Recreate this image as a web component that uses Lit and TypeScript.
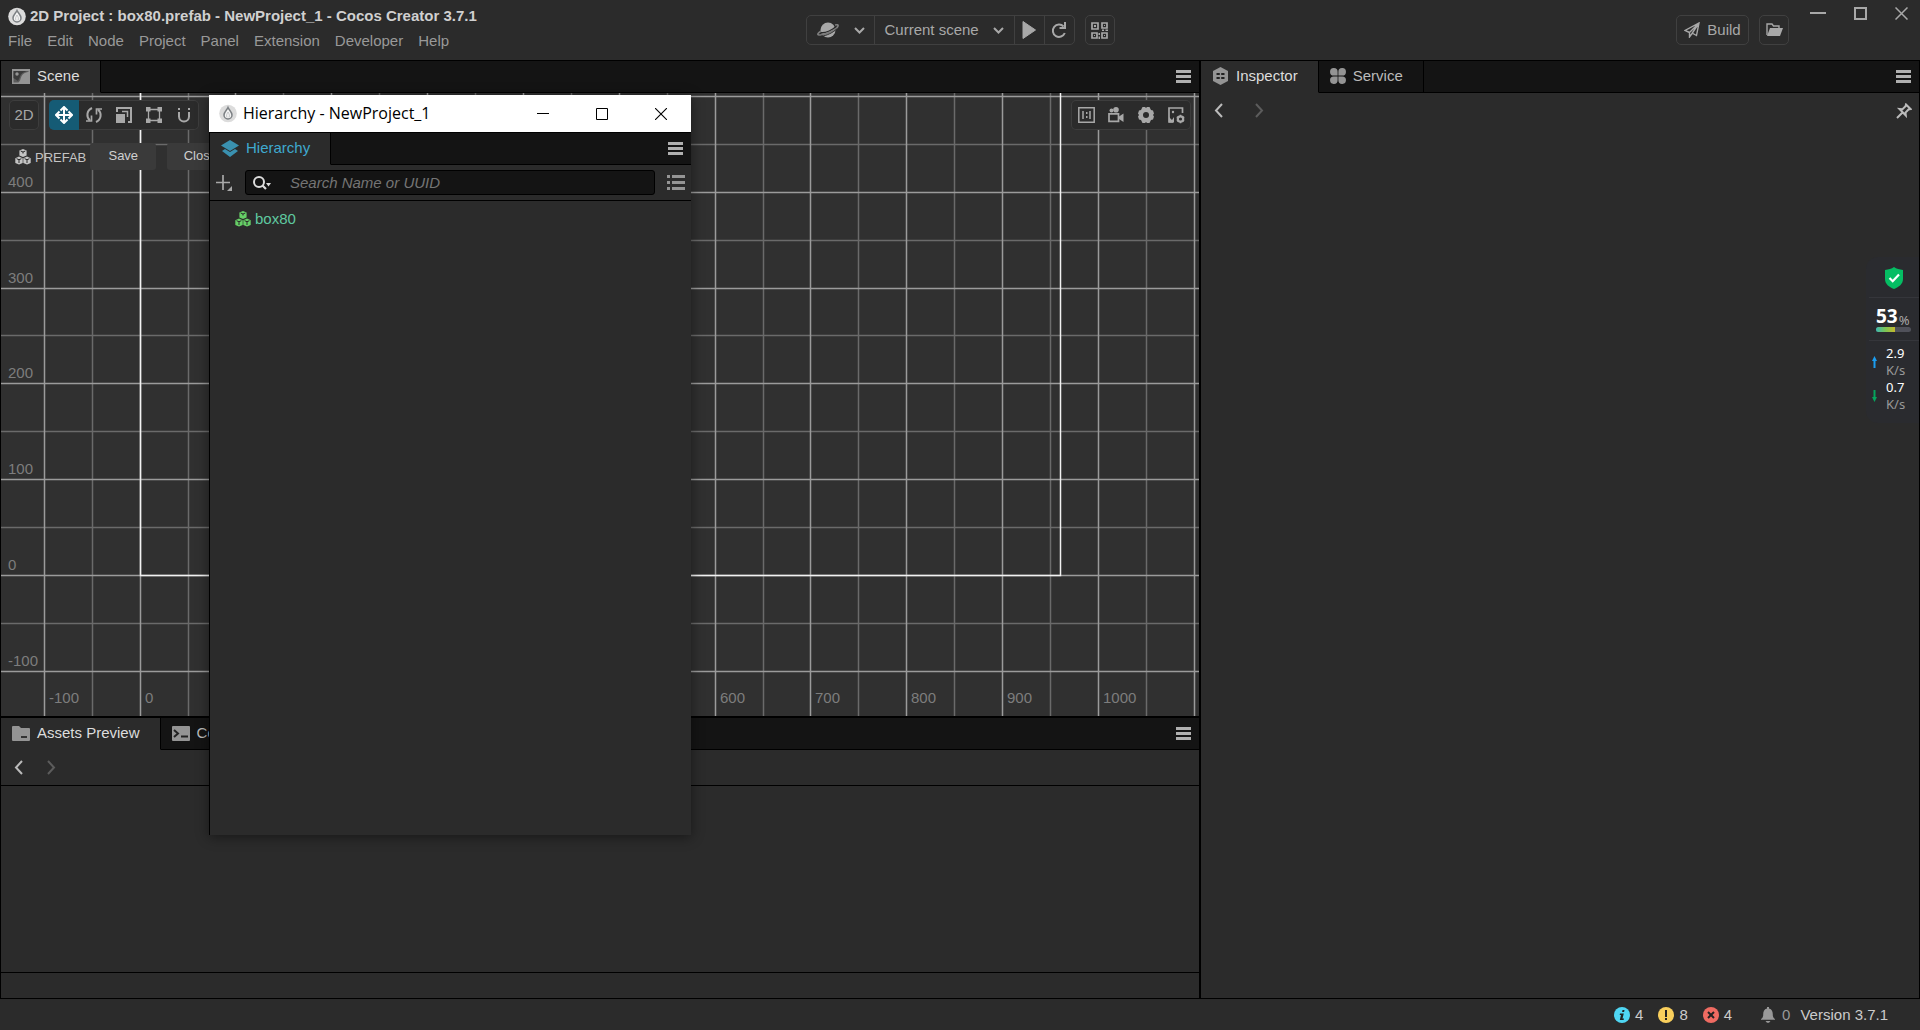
import { LitElement, html, svg, css } from "lit";
import { customElement } from "lit/decorators.js";

const SCALE = 115 / 120;
const ORIGIN_X = 138.6;
const ORIGIN_Y = 482;

const range = (from: number, to: number, step: number) => {
  const out: number[] = [];
  for (let v = from; v <= to; v += step) out.push(v);
  return out;
};

const icon = (w: number, h: number, body: unknown) =>
  html`<svg class="icon" width=${w} height=${h} viewBox="0 0 ${w} ${h}" aria-hidden="true">${body}</svg>`;

const chevron = (d: string, w: number, h: number) =>
  icon(w, h, svg`<path d=${d} fill="none" stroke="currentColor" stroke-width="2"/>`);
const down = () => chevron("M1 2 L5.500 6.500 L10 2", 11, 9);
const left = () => chevron("M8 1 L2 7.5 L8 14", 10, 15);
const right = () => chevron("M2 1 L8 7.5 L2 14", 10, 15);

const menuIcon = () =>
  icon(15, 13, svg`<path d="M0 0h15v3H0zM0 5h15v3H0zM0 10h15v3H0z" fill="currentColor"/>`);

const cubes = () =>
  icon(16, 16, svg`
    <path d="M8 0l3.600 1.500v5L8 8 4.400 6.500v-5z" fill="currentColor"/>
    <path d="M4 7.600l3.700 1.600v4.700L4 15.600.3 13.900V9.200z" fill="currentColor"/>
    <path d="M12 7.600l3.700 1.600v4.700L12 15.600l-3.700-1.700V9.200z" fill="currentColor"/>
    <path d="M5.700 2L8 3l2.300-1M8 3v1.500M1.600 9.700L4 10.700l2.400-1M4 10.700v3.300M9.600 9.700l2.400 1 2.400-1M12 10.700v3.300" fill="none" stroke="#2b2b2b" stroke-width="1"/>`);

const flame = () =>
  icon(18, 19, svg`
    <circle cx="9" cy="9.500" r="8.800" fill="#dcdcdc"/>
    <path d="M9 3.500C8 6 5 8 5 11a4 4 0 0 0 8 0C13 8 10 6 9 3.500z" fill="#f4f4f4" stroke="#7c8084" stroke-width="1.500"/>
    <path d="M9 8c-1 2-2 3-1 5.500M9 8c1 2 2 3 1 5.500" fill="none" stroke="#c3c5c7" stroke-width="1"/>`);

@customElement("app-root")
export class AppRoot extends LitElement {
  static styles = css`
    :host {
      display: block;
      font: 15px/20px "Liberation Sans", Arial, sans-serif;
      color: #ccc;
      --bg: #2b2b2b;
      --dark: #141414;
      --dim: #999;
    }
    * { box-sizing: border-box; }
    button, input {
      font: inherit;
      color: inherit;
      background: none;
      border: 0;
      padding: 0;
      margin: 0;
    }
    button { display: flex; align-items: center; justify-content: center; }
    h1, h2 { font: inherit; margin: 0; }
    .icon { display: block; flex: none; }
    .app {
      position: relative;
      height: 100vh;
      display: flex;
      flex-direction: column;
      background: var(--bg);
      overflow: hidden;
    }
    .header {
      height: 60px;
      flex: none;
      display: grid;
      grid-template-columns: 1fr auto 1fr;
    }
    .brand { display: flex; flex-direction: column; padding: 6px 0 0 8px; gap: 4px; }
    .title { display: flex; align-items: center; gap: 4px; white-space: nowrap; }
    .title h1 { font-weight: bold; color: #d0d0d0; }
    .menus { display: flex; gap: 15px; color: var(--dim); }
    .menus button { line-height: 22px; }
    .center { display: flex; gap: 10px; padding-top: 15px; color: #a8a8a8; }
    .group {
      display: flex;
      height: 30px;
      border: 1px solid #404040;
      border-radius: 5px;
      overflow: hidden;
    }
    .group button + button { border-left: 1px solid #404040; }
    .group .platform { width: 67px; gap: 15px; padding-left: 10px; justify-content: flex-start; }
    .group .current { width: 140px; gap: 14px; padding-left: 10px; justify-content: flex-start; }
    .square { width: 28px; }
    .step { width: 30px; }
    .end { display: flex; justify-content: flex-end; gap: 10px; padding-top: 15px; color: #a8a8a8; }
    .build { width: 71px; gap: 7px; }
    .window-controls { display: flex; height: 14px; gap: 28px; margin: -9px 12px 0 11px; }
    .body {
      flex: 1;
      min-height: 0;
      display: grid;
      grid-template-columns: minmax(0, 1198fr) minmax(0, 718fr);
      gap: 2px;
      padding: 1px;
      background: #000;
    }
    .left { display: grid; grid-template-rows: minmax(0, 655fr) minmax(0, 280fr); gap: 2px; }
    .panel { background: var(--bg); display: flex; flex-direction: column; min-height: 0; overflow: hidden; }
    .tabs {
      display: flex;
      flex: none;
      height: 32px;
      background: var(--dark);
    }
    .tab {
      gap: 7px;
      padding: 0 20px 1px 11px;
      border-right: 1px solid #000;
      border-bottom: 1px solid #000;
      color: #bbb;
      white-space: nowrap;
    }
    .tab.on { background: var(--bg); border-bottom-color: var(--bg); color: #ddd; }
    .tab .icon { color: #949494; }
    .fill { flex: 1; border-bottom: 1px solid #000; display: flex; justify-content: flex-end; align-items: center; padding-right: 8px; color: #b0b0b0; }
    .scene { position: relative; flex: 1; min-height: 0; background: #303030; overflow: hidden; }
    .grid { display: block; width: 100%; height: 100%; }
    .grid text { font: 15px "Liberation Sans", Arial, sans-serif; fill: #7d7d7d; }
    .tools {
      position: absolute;
      inset: 7px 8px auto 8px;
      display: flex;
      gap: 10px;
      color: #a8a8a8;
    }
    .tools .group { background: var(--bg); border: 0; box-shadow: inset 0 0 0 1px #3d3d3d; }
    .tools .group button { width: 30px; border: 0; }
    .tools .group .active { background: #155b75; color: #fff; }
    .tools .views { margin-left: auto; }
    .prefab {
      position: absolute;
      inset: 50px auto auto 14px;
      display: flex;
      align-items: center;
      gap: 4px;
      font-size: 13px;
      color: #c4c4c4;
    }
    .prefab span { padding-top: 2px; }
    .prefab button {
      height: 27px;
      width: 66px;
      padding-bottom: 2px;
      border-radius: 3px;
      background: #3a3a3a;
      color: #d0d0d0;
      margin-right: 7px;
    }
    .nav { display: flex; align-items: center; flex: none; height: 35px; padding: 0 7px 0 13px; gap: 22px; color: #bbb; }
    .nav .off { color: #5c5c5c; }
    .nav.wide { gap: 30px; }
    .nav .pin { margin-left: auto; }
    .assets { flex: 1; border-top: 1px solid #000; border-bottom: 1px solid #000; }
    .foot { height: 25px; flex: none; }
    .status {
      height: 31px;
      flex: none;
      display: flex;
      align-items: center;
      justify-content: flex-end;
      gap: 15px;
      padding-right: 32px;
    }
    .status button { gap: 5px; }
    .status .alerts { gap: 7px; margin-left: 14px; color: var(--dim); }
    .status .version { margin-left: -5px; }
    .window {
      position: absolute;
      left: 209px;
      top: 95px;
      width: 482px;
      height: 740px;
      display: flex;
      flex-direction: column;
      background: #000;
      box-shadow: 0 2px 12px rgba(0, 0, 0, 0.45);
    }
    .caption {
      height: 37px;
      flex: none;
      display: flex;
      align-items: center;
      gap: 6px;
      padding: 0 24px 0 10px;
      background: #fff;
      color: #000;
      font-family: "Open Sans", "Noto Sans", sans-serif;
    }
    .caption h2 { flex: 1; font-size: 16px; padding-bottom: 1px; }
    .caption .controls { display: flex; gap: 47px; }
    .window .panel { flex: 1; margin: 1px 0 0 1px; }
    .window .tab.on { color: #3fa9cf; }
    .window .tab.on .icon { color: #3a91b0; }
    .search { display: flex; align-items: center; gap: 12px; height: 36px; flex: none; padding: 0 6px; border-bottom: 1px solid #000; color: #a8a8a8; }
    .search .field {
      flex: 1;
      display: flex;
      align-items: center;
      height: 25px;
      gap: 19px;
      padding-left: 7px;
      border: 1px solid #000;
      border-radius: 3px;
      background: var(--dark);
      color: #ddd;
    }
    .search input { flex: 1; min-width: 0; outline: 0; font-style: italic; }
    .search input::placeholder { color: #757575; opacity: 1; }
    .node { display: flex; align-items: center; gap: 4px; padding: 8px 0 0 25px; color: #5fc9a0; }
    .node .icon { color: #66cf66; }
    .meter {
      position: absolute;
      right: 1px;
      top: 257px;
      width: 53px;
      padding: 10px 0 10px 3px;
      border-radius: 12px 0 0 12px;
      background: #2a2b2f;
      font-family: "Noto Sans", sans-serif;
      display: flex;
      flex-direction: column;
    }
    .meter .shield { height: 31px; display: flex; justify-content: center; align-items: flex-start; border-bottom: 1px solid #35363b; }
    .meter .load { padding: 7px 8px 8px 7px; border-bottom: 1px solid #35363b; }
    .meter .pct { display: flex; align-items: center; gap: 1px; height: 22px; color: #aaa; font-size: 13px; line-height: 22px; }
    .meter .pct span { padding-top: 8px; }
    .meter strong { font-size: 19px; color: #fff; }
    .bar { height: 5px; border-radius: 3px; background: #50515a; overflow: hidden; }
    .bar i { display: block; height: 5px; background: linear-gradient(90deg, #3cb8b0, #7cc455, #c5b82c); }
    .rates { display: grid; grid-template-columns: 5px auto; align-items: center; column-gap: 9px; padding: 4px 0 0 3px; font-size: 13px; line-height: 17px; color: #999; }
    .rates b { font-weight: normal; color: #fff; display: block; }
  `;

  private scene() {
    const x = (v: number) => Math.round(ORIGIN_X + v * SCALE) + 0.5;
    const y = (v: number) => Math.round(ORIGIN_Y - v * SCALE) + 0.5;
    const xs = range(-150, 2500, 50);
    const ys = range(-500, 500, 50);
    const major = (v: number) => v % 100 === 0;
    const minor = (v: number) => v % 100 !== 0;
    const columns = (vs: number[], tone: string) =>
      vs.map((v) => svg`<line x1=${x(v)} x2=${x(v)} y1="0" y2="100%" stroke=${tone} stroke-width="1.500"/>`);
    const rows = (vs: number[], tone: string) =>
      vs.map((v) => svg`<line x1="0" x2="100%" y1=${y(v)} y2=${y(v)} stroke=${tone} stroke-width="1.500"/>`);
    return html`<svg class="grid" role="img" aria-label="Scene grid">
      ${columns(xs.filter(minor), "#6a6a6a")}
      ${rows(ys.filter(minor), "#6a6a6a")}
      ${columns(xs.filter(major), "#9b9b9b")}
      ${rows(ys.filter(major), "#9b9b9b")}
      <rect x=${x(0)} y="-200" width=${x(960) - x(0)} height=${y(0) + 200} fill="none" stroke="#f2f2f2" stroke-width="1.500"/>
      ${range(-100, 400, 100).map((v) => svg`<text x="7" y=${y(v) - 5.5}>${v}</text>`)}
      ${[-100, 0, 600, 700, 800, 900, 1000].map((v) => svg`<text x=${x(v) + 4.5} y="610">${v}</text>`)}
    </svg>`;
  }

  private tools() {
    return html`<div class="tools">
      <div class="group"><button>2D</button></div>
      <div class="group">
        <button class="active" aria-label="Move">${icon(18, 18, svg`<path d="M9 2v14M2 9h14" stroke="currentColor" stroke-width="2"/><path d="M5.500 4.500L9 1l3.500 3.500M5.500 13.500L9 17l3.500-3.500M4.500 5.500L1 9l3.500 3.500M13.500 5.500L17 9l-3.500 3.500" fill="none" stroke="currentColor" stroke-width="2"/>`)}</button>
        <button aria-label="Rotate">${icon(18, 18, svg`<path d="M7 2C1.500 4.500 1 11 5 14.500M11 16c5.500-2.500 6-9 2-12.500" fill="none" stroke="currentColor" stroke-width="2"/><path d="M1 15h5.500V9.500M17 3h-5.500v5.500" fill="none" stroke="currentColor" stroke-width="1.700"/>`)}</button>
        <button aria-label="Scale">${icon(16, 16, svg`<path d="M1 5V1h14v14h-3" fill="none" stroke="currentColor" stroke-width="2"/><path d="M0 7h9v9H0z" fill="currentColor"/><path d="M6 4.500h5.500V10" fill="none" stroke="currentColor" stroke-width="1.500"/>`)}</button>
        <button aria-label="Rect">${icon(16, 16, svg`<path d="M2.500 2.500h11v11h-11z" fill="none" stroke="currentColor" stroke-width="1.300"/><path d="M0 0h4.500v4.500H0zM11.500 0H16v4.500h-4.500zM0 11.500h4.500V16H0zM11.500 11.500H16V16h-4.500z" fill="currentColor"/>`)}</button>
        <button aria-label="Snap">${icon(14, 16, svg`<path d="M2 5v4.500a5 5 0 0 0 10 0V5" fill="none" stroke="currentColor" stroke-width="2"/><path d="M1 1h2v2H1zM11 1h2v2h-2z" fill="currentColor"/>`)}</button>
      </div>
      <div class="group views">
        <button aria-label="Actual size">${icon(17, 16, svg`<path d="M.8.8h15.400v14.400H.8z" fill="none" stroke="currentColor" stroke-width="1.500"/><path d="M5 4v8M12 4v8" stroke="currentColor" stroke-width="1.500"/><path d="M8 5h1.500v2H8zM8 9h1.500v2H8z" fill="currentColor"/>`)}</button>
        <button aria-label="Camera">${icon(16, 16, svg`<path d="M1 6.800h9.500v7.500H1z" fill="none" stroke="currentColor" stroke-width="1.700"/><path d="M11 9.500l4.500-3v8.500l-4.500-3z" fill="currentColor"/><circle cx="3.500" cy="3.500" r="2" fill="currentColor"/><circle cx="8" cy="2.800" r="2.800" fill="currentColor"/>`)}</button>
        <button aria-label="Gizmo settings">${icon(16, 16, svg`<path fill-rule="evenodd" d="M4.500 0h2.500l1 1 1-1h2.500l1.500 3 2 .5 1 3-1 1.500 1 1.500-1 3-2 .5-1.500 3H9l-1-1-1 1H4.500L3 13l-2-.5-1-3L1 8 0 6.500l1-3L3 3zM8 5a3 3 0 1 0 0 6 3 3 0 0 0 0-6z" fill="currentColor"/>`)}</button>
        <button aria-label="Scene settings">${icon(17, 17, svg`<path d="M14.500 6V1H1v14h4" fill="none" stroke="currentColor" stroke-width="1.700"/><circle cx="5" cy="5" r="1.200" fill="currentColor"/><path d="M1 10l3 3 2-3v5.500H1z" fill="currentColor"/><circle cx="12.500" cy="12" r="2.700" fill="none" stroke="currentColor" stroke-width="2.200"/><path d="M12.500 7.800v8.400M8.800 9.900l7.400 4.200M16.200 9.900l-7.400 4.200" stroke="currentColor" stroke-width="1.500" stroke-dasharray="1.700 5"/>`)}</button>
      </div>
    </div>`;
  }

  render() {
    return html`<main class="app">
      <header class="header">
        <div class="brand">
          <div class="title">${flame()}<h1>2D Project : box80.prefab - NewProject_1 - Cocos Creator 3.7.1</h1></div>
          <nav class="menus">
            ${["File", "Edit", "Node", "Project", "Panel", "Extension", "Developer", "Help"].map((m) => html`<button>${m}</button>`)}
          </nav>
        </div>
        <div class="center">
          <div class="group">
            <button class="platform" aria-label="Preview platform">
              ${icon(22, 16, svg`<circle cx="11" cy="8" r="7.500" fill="currentColor"/><path d="M3 10.500C8 12 17 7.500 20 3.500" fill="none" stroke="#2b2b2b" stroke-width="1.500"/><path d="M4 9C0 11.500 0 13 3 13 8 13 20 7.500 21 4c.4-1.300-1-1.500-3-1" fill="none" stroke="#7c7c7c" stroke-width="1.700"/><path d="M4 14.300C9 14 17 10 19.500 7" fill="none" stroke="#2b2b2b" stroke-width="1"/>`)}${down()}
            </button>
            <button class="current">Current scene ${down()}</button>
            <button class="step" aria-label="Play">${icon(14, 18, svg`<path d="M1 .5l12.500 8.500L1 17.500z" fill="currentColor" stroke="currentColor" stroke-linejoin="round"/>`)}</button>
            <button class="step" aria-label="Refresh">${icon(16, 17, svg`<path d="M12.600 4.500A6.200 6.200 0 1 0 13.800 11" fill="none" stroke="currentColor" stroke-width="2"/><path d="M15 0v7H8.500V5H13V0z" fill="currentColor"/>`)}</button>
          </div>
          <div class="group">
            <button class="square" aria-label="QR code">${icon(17, 17, svg`<path d="M1 1h6v6H1zM11 1h5v5h-5zM1 11h5v5H1zM11 11h5v5h-5z" fill="none" stroke="currentColor" stroke-width="1.700"/><path d="M3 3h2v2H3zM13 3h1v1h-1zM3 13h1v1H3zM13 13h1v1h-1zM7.500 11H9v2H7.500zM7.500 14.500H9V17H7.500zM11 7.500h2V9h-2zM14.500 7.500H17V9h-2.500z" fill="currentColor"/>`)}</button>
          </div>
        </div>
        <div class="end">
          <div class="group"><button class="build">${icon(16, 16, svg`<path d="M5.500 10.500L1 8.500 15 1l-2.500 12.500-4.500-2.500M15 1L5.500 10.500v4.500l2.500-3.500L15 1" fill="none" stroke="currentColor" stroke-width="1.400"/>`)}Build</button></div>
          <div class="group"><button class="square" aria-label="Open folder">${icon(17, 14, svg`<path d="M1 12V1h5l1.500 2H13v2" fill="none" stroke="currentColor" stroke-width="1.400"/><path d="M4 5h13l-3 8H1z" fill="currentColor"/>`)}</button></div>
          <div class="window-controls">
            <button aria-label="Minimize">${icon(16, 14, svg`<path d="M0 6h16v2H0z" fill="currentColor"/>`)}</button>
            <button aria-label="Maximize">${icon(13, 13, svg`<path d="M1 1h11v11H1z" fill="none" stroke="currentColor" stroke-width="2"/>`)}</button>
            <button aria-label="Close">${icon(13, 13, svg`<path d="M.5.5l12 12M12.500.5L.5 12.500" stroke="currentColor" stroke-width="1.500"/>`)}</button>
          </div>
        </div>
      </header>

      <div class="body">
        <div class="left">
          <section class="panel">
            <div class="tabs">
              <button class="tab on">${icon(18, 15, svg`<path d="M0 0h18v15H0z" fill="#5c5c5c"/><path d="M0 0h18v2H0zM0 0h1.500v15H0zM16.500 0H18v15h-1.500zM0 13.500h18V15H0zM5 14.500c3-2 3-3 4-6 1-3 3-5 9-6v12z" fill="currentColor"/><path d="M1.500 2H15C9 4 8.500 6 7.500 9L6 12l-4.500-3z" fill="#3a3a3a"/><circle cx="5" cy="5" r="1.700" fill="currentColor"/>`)}Scene</button>
              <div class="fill"><button aria-label="Panel menu">${menuIcon()}</button></div>
            </div>
            <div class="scene">
              ${this.scene()} ${this.tools()}
              <div class="prefab">${cubes()}<span>PREFAB</span><button>Save</button><button>Close</button></div>
            </div>
          </section>
          <section class="panel">
            <div class="tabs">
              <button class="tab on">${icon(18, 15, svg`<path d="M0 1a1 1 0 0 1 1-1h6l2 2h8a1 1 0 0 1 1 1v11a1 1 0 0 1-1 1H1a1 1 0 0 1-1-1z" fill="currentColor"/><path d="M9 10h6v2H9z" fill="#333"/>`)}Assets Preview</button>
              <button class="tab">${icon(18, 15, svg`<rect width="18" height="15" rx="1" fill="currentColor"/><path d="M2 4l4 3.500L2 11M9 10.500h7" fill="none" stroke="#222" stroke-width="2"/>`)}Console</button>
              <div class="fill"><button aria-label="Panel menu">${menuIcon()}</button></div>
            </div>
            <div class="nav"><button aria-label="Back">${left()}</button><button class="off" aria-label="Forward">${right()}</button></div>
            <div class="assets"></div>
            <div class="foot"></div>
          </section>
        </div>
        <section class="panel">
          <div class="tabs">
            <button class="tab on">${icon(17, 18, svg`<path d="M8.500 0L16 4v10l-7.500 4L1 14V4z" fill="currentColor"/><path d="M4.500 6h3.300v2H4.500zM9.200 6h3.300v2H9.200zM4.500 10h3.300v2H4.500zM9.200 10h3.300v2H9.200z" fill="#222"/>`)}Inspector</button>
            <button class="tab">${icon(16, 16, svg`<path d="M4 0a3.700 3.700 0 0 1 3.600 3.700v3.900H3.700A3.800 3.800 0 0 1 4 0zM12 0a3.700 3.700 0 0 0-3.600 3.700v3.900h3.900A3.800 3.800 0 0 0 12 0zM4 16a3.700 3.700 0 0 0 3.600-3.700V8.400H3.700A3.800 3.800 0 0 0 4 16zM12 16a3.700 3.700 0 0 1-3.600-3.700V8.400h3.900A3.800 3.800 0 0 1 12 16z" fill="currentColor"/>`)}Service</button>
            <div class="fill"><button aria-label="Panel menu">${menuIcon()}</button></div>
          </div>
          <div class="nav wide">
            <button aria-label="Back">${left()}</button><button class="off" aria-label="Forward">${right()}</button>
            <button class="pin" aria-label="Pin">${icon(16, 16, svg`<path d="M10 1.500l4.500 4.500-2 .5-3 3 .3 3L3.500 6l3 .3 3-3zM6.500 9.500L1 15" fill="none" stroke="currentColor" stroke-width="2"/>`)}</button>
          </div>
        </section>
      </div>

      <footer class="status">
        <button aria-label="4 messages">${icon(16, 16, svg`<circle cx="8" cy="8" r="8" fill="#4fd6f3"/><path d="M8.500 3h2l-.4 2h-2zM6 6.500h3.800l-1.300 5H10l-.4 1.500H5.800l1.200-5H5.700z" fill="#222"/>`)}4</button>
        <button aria-label="8 warnings">${icon(16, 16, svg`<circle cx="8" cy="8" r="8" fill="#f9cf5c"/><path d="M7 3h2v7H7zM7 11h2v2H7z" fill="#222"/>`)}8</button>
        <button aria-label="4 errors">${icon(16, 16, svg`<circle cx="8" cy="8" r="8" fill="#ef6b62"/><path d="M5 5l6 6M11 5l-6 6" stroke="#222" stroke-width="2"/>`)}4</button>
        <button class="alerts">${icon(14, 16, svg`<path d="M6 0h2v1.500c3 .8 3.800 3 3.800 6 0 2.500.7 3.500 2.200 4.500v.8H0V12c1.500-1 2.200-2 2.200-4.500 0-3 .8-5.200 3.800-6zM4.500 14h5L8 15.800H6z" fill="currentColor"/>`)}0</button>
        <span class="version">Version 3.7.1</span>
      </footer>

      <section class="window">
        <div class="caption">
          ${flame()}<h2>Hierarchy - NewProject_1</h2>
          <div class="controls">
            <button aria-label="Minimize">${icon(12, 12, svg`<path d="M0 5h12v1H0z"/>`)}</button>
            <button aria-label="Maximize">${icon(12, 12, svg`<path d="M.5.5h11v11H.5z" fill="none" stroke="#000"/>`)}</button>
            <button aria-label="Close">${icon(12, 12, svg`<path d="M0 0l12 12M12 0L0 12" stroke="#000" stroke-width="1.100"/>`)}</button>
          </div>
        </div>
        <div class="panel">
          <div class="tabs">
            <button class="tab on">${icon(18, 17, svg`<path d="M9 0l9 5.500L9 11 0 5.500z" fill="currentColor"/><path d="M1 11l3-2 5 3 5-3 3 2-8 6z" fill="currentColor"/>`)}Hierarchy</button>
            <div class="fill"><button aria-label="Panel menu">${menuIcon()}</button></div>
          </div>
          <div class="search">
            <button aria-label="Create node">${icon(17, 16, svg`<path d="M7 0v15M0 7.500h14" stroke="currentColor" stroke-width="1.700"/><path d="M16 11v5h-5z" fill="currentColor"/>`)}</button>
            <label class="field">${icon(18, 14, svg`<circle cx="6" cy="6" r="5" fill="none" stroke="currentColor" stroke-width="2"/><path d="M9.500 9.500L13 13" stroke="currentColor" stroke-width="2.200"/><path d="M13 7h5l-2.500 3.500z" fill="currentColor"/>`)}<input type="text" aria-label="Search" placeholder="Search Name or UUID" /></label>
            <button aria-label="Expand list">${icon(18, 15, svg`<path d="M0 0h3v3H0zM5 0h13v3H5zM0 6h3v3H0zM5 6h13v3H5zM0 12h3v3H0zM5 12h13v3H5z" fill="currentColor" opacity=".85"/>`)}</button>
          </div>
          <div class="node">${cubes()}<span>box80</span></div>
        </div>
      </section>

      <aside class="meter">
        <div class="shield">${icon(18, 22, svg`<path d="M9 0c2.500 2 5.500 2.500 9 3v9c0 5-4 8-9 10-5-2-9-5-9-10V3c3.500-.5 6.500-1 9-3z" fill="#05bd63"/><path d="M4.500 11l3.200 3.200L14 7.500" fill="none" stroke="#fff" stroke-width="2.200"/>`)}</div>
        <div class="load">
          <div class="pct"><strong>53</strong><span>%</span></div>
          <div class="bar"><i style="width:53%"></i></div>
        </div>
        <div class="rates">
          ${icon(5, 12, svg`<path d="M2.500 0L5 5H3.500v7h-2V5H0z" fill="#1b9df0"/>`)}<span><b>2.9</b>K/s</span>
          ${icon(5, 12, svg`<path d="M2.500 12L0 7h1.500V0h2v7H5z" fill="#05a45c"/>`)}<span><b>0.7</b>K/s</span>
        </div>
      </aside>
    </main>`;
  }
}
